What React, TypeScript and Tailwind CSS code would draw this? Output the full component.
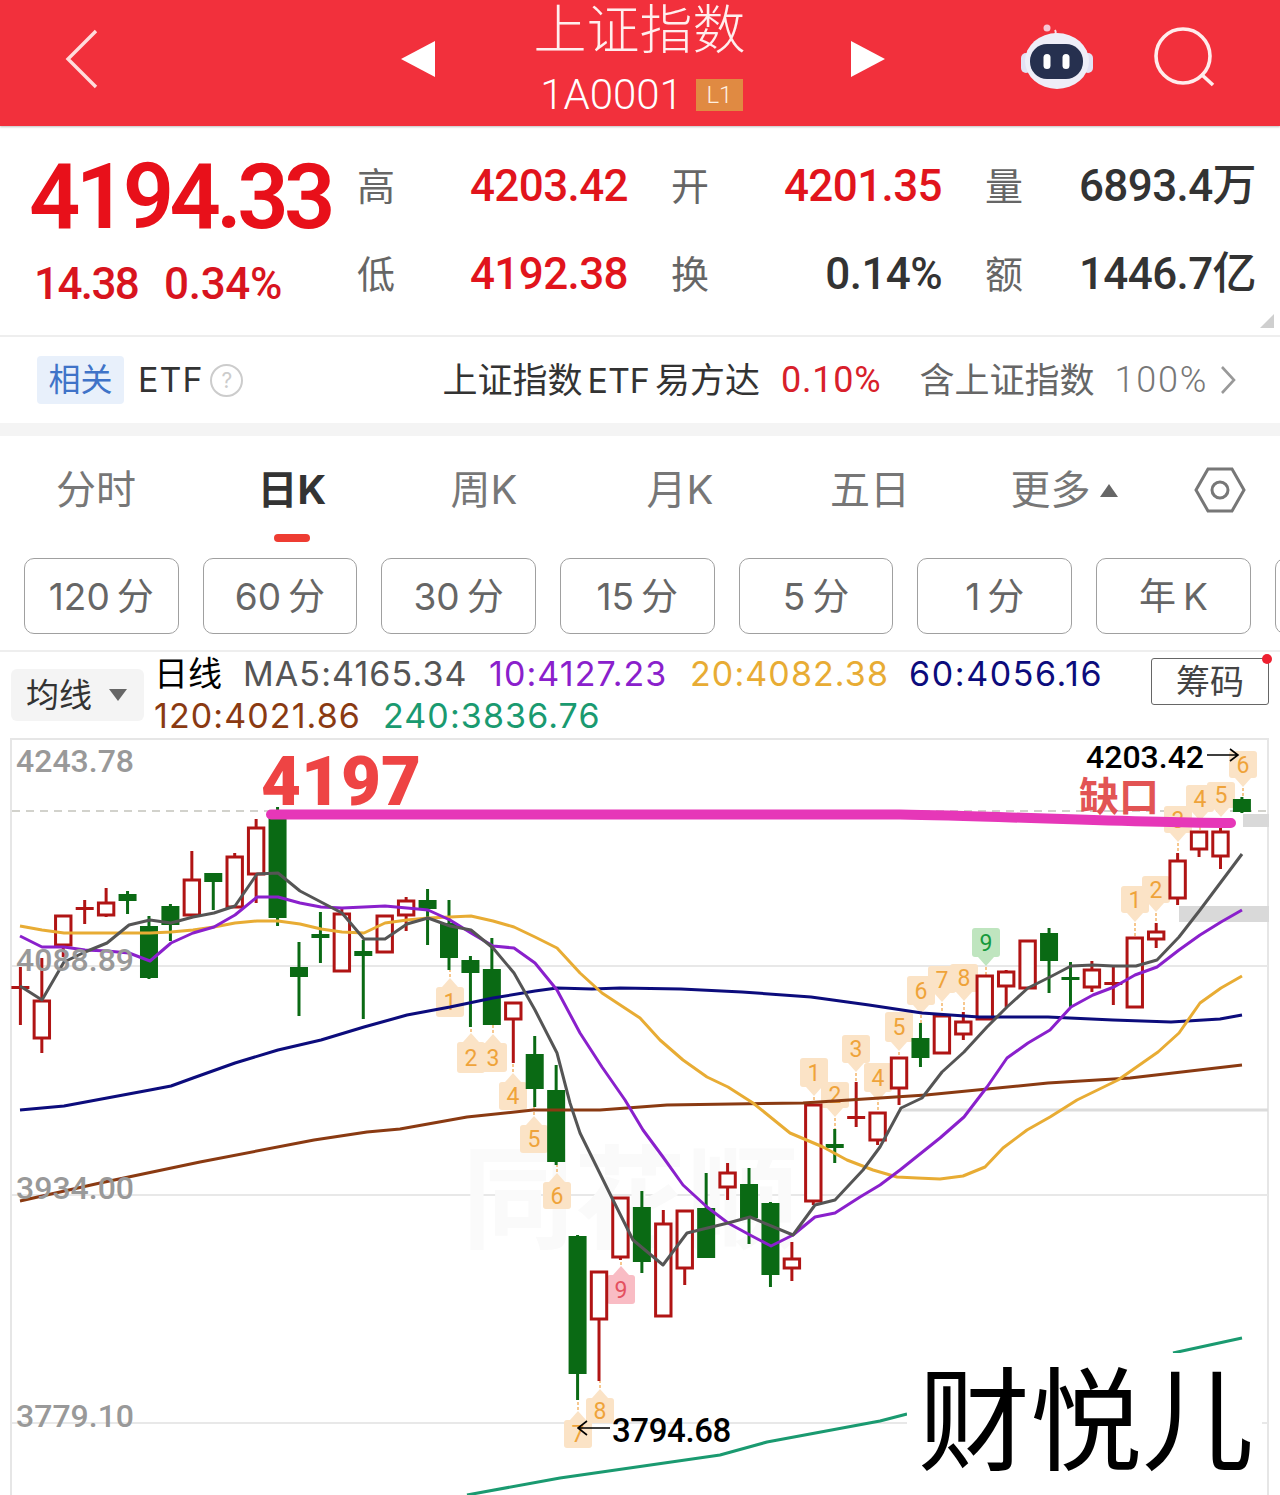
import React from 'react';

type Candle = ['h' | 'g' | 'c', number, number, number, number];
type Tag = [string, number, number, number, number, 'o' | 'p' | 'n'];

// kind, body top, body bottom, wick top, wick bottom
const candles: Candle[] = [
  ['c', 986, 989, 967, 1025], ['h', 1001, 1038, 958, 1053], ['h', 916, 945, 916, 957], ['c', 907, 910, 900, 924],
  ['h', 903, 915, 888, 917], ['g', 894, 901, 891, 914], ['g', 926, 978, 916, 979], ['g', 906, 925, 904, 941],
  ['h', 880, 915, 851, 915], ['g', 873, 882, 873, 910], ['h', 857, 907, 853, 907], ['h', 828, 874, 819, 903],
  ['g', 812, 918, 807, 926], ['g', 967, 977, 942, 1016], ['g', 934, 938, 912, 963], ['h', 914, 971, 908, 971],
  ['g', 951, 956, 940, 1019], ['h', 916, 952, 916, 952], ['h', 901, 915, 897, 931], ['g', 900, 909, 889, 945],
  ['g', 923, 958, 900, 970], ['g', 960, 973, 956, 1027], ['g', 969, 1025, 938, 1025], ['h', 1003, 1019, 1002, 1063],
  ['g', 1054, 1089, 1036, 1107], ['g', 1090, 1162, 1065, 1165], ['g', 1236, 1374, 1235, 1400], ['h', 1272, 1319, 1272, 1381],
  ['h', 1198, 1257, 1198, 1260], ['g', 1207, 1262, 1191, 1273], ['h', 1224, 1316, 1210, 1316], ['h', 1211, 1268, 1211, 1285],
  ['g', 1208, 1258, 1173, 1258], ['h', 1173, 1187, 1163, 1200], ['g', 1184, 1218, 1168, 1244], ['g', 1203, 1275, 1202, 1287],
  ['h', 1259, 1268, 1242, 1281], ['h', 1105, 1201, 1105, 1205], ['g', 1144, 1148, 1129, 1163], ['c', 1116, 1119, 1082, 1127],
  ['h', 1113, 1140, 1113, 1145], ['h', 1058, 1088, 1058, 1105], ['g', 1038, 1058, 1023, 1067], ['h', 1016, 1053, 1016, 1053],
  ['h', 1022, 1034, 1012, 1040], ['h', 976, 1019, 975, 1020], ['h', 972, 986, 970, 1007], ['h', 941, 988, 941, 988],
  ['g', 933, 961, 928, 993], ['g', 977, 980, 962, 1007], ['h', 970, 987, 961, 992], ['c', 982, 985, 965, 1005],
  ['h', 938, 1007, 938, 1007], ['h', 932, 939, 923, 948], ['h', 861, 898, 853, 905], ['h', 832, 849, 832, 857],
  ['h', 832, 856, 828, 869], ['g', 799, 812, 797, 813],
];

// digit, x, box top, box bottom, tip of the pointer, colour
const tags: Tag[] = [
  ['1', 450, 987, 1017, 970, 'o'], ['2', 471, 1042, 1073, 1027, 'o'], ['3', 493, 1043, 1072, 1025, 'o'], ['4', 513, 1082, 1110, 1063, 'o'],
  ['5', 534, 1125, 1153, 1107, 'o'], ['6', 557, 1182, 1209, 1165, 'o'], ['7', 578, 1420, 1448, 1400, 'o'], ['8', 600, 1398, 1423, 1381, 'o'],
  ['9', 621, 1275, 1304, 1260, 'p'], ['1', 814, 1058, 1087, 1103, 'o'], ['2', 835, 1082, 1108, 1129, 'o'], ['3', 856, 1035, 1063, 1082, 'o'],
  ['4', 878, 1063, 1092, 1112, 'o'], ['5', 899, 1012, 1042, 1057, 'o'], ['6', 921, 976, 1005, 1023, 'o'], ['7', 942, 966, 993, 1015, 'o'],
  ['8', 964, 964, 992, 1012, 'o'], ['9', 986, 928, 957, 975, 'n'], ['1', 1135, 886, 913, 937, 'o'], ['2', 1156, 876, 903, 923, 'o'],
  ['3', 1178, 806, 833, 853, 'o'], ['4', 1200, 785, 812, 832, 'o'], ['5', 1221, 782, 808, 828, 'o'], ['6', 1243, 751, 778, 797, 'o'],
];

const ma5 = '20,986 42,1000 64,962 85,952 107,943 129,925 150,920 171,923 193,917 214,913 235,906 257,874 278,873 300,891 321,902 342,913 364,939 385,939 407,924 428,918 450,926 471,930 493,948 514,973 535,1010 557,1053 570,1103 580,1133 613,1200 633,1240 663,1265 687,1233 728,1223 750,1217 793,1235 815,1205 835,1200 863,1170 880,1147 901,1108 922,1098 942,1072 964,1052 987,1027 1007,1007 1028,988 1050,977 1071,966 1093,965 1113,966 1136,966 1157,960 1179,937 1200,910 1221,882 1242,854';
const ma10 = '20,936 42,947 64,947 85,950 107,951 129,953 150,961 171,943 193,933 214,927 235,915 257,897 278,897 300,903 321,907 342,908 364,907 385,906 407,908 428,910 450,920 471,933 493,946 514,948 535,963 557,990 580,1033 602,1067 625,1100 643,1130 663,1157 683,1185 707,1207 728,1223 750,1235 771,1246 793,1235 815,1217 835,1213 860,1197 880,1185 900,1170 940,1138 964,1117 987,1087 1007,1058 1028,1043 1050,1030 1071,1007 1093,995 1114,987 1135,975 1157,967 1179,950 1200,935 1221,922 1242,910';
const ma20 = '20,926 42,930 64,933 85,933 107,933 129,933 150,933 171,932 193,930 214,927 235,923 257,921 278,921 300,924 321,929 342,932 364,933 385,923 407,920 428,918 450,917 471,916 493,921 514,927 535,937 557,948 580,973 602,993 640,1018 660,1040 683,1060 707,1077 728,1087 753,1103 790,1133 823,1147 847,1160 873,1170 897,1177 917,1178 940,1179 963,1176 985,1167 1003,1148 1027,1130 1050,1117 1077,1100 1118,1080 1158,1052 1179,1033 1200,1003 1221,988 1242,976';
const ma60 = '20,1110 42,1108 64,1106 107,1098 150,1090 171,1086 193,1078 235,1063 278,1050 321,1040 364,1027 407,1015 450,1007 493,998 535,991 557,988 592,989 620,988 681,989 742,992 811,997 869,1005 922,1013 979,1017 1048,1017 1113,1020 1171,1022 1220,1019 1242,1015';
const ma120 = '20,1201 100,1183 200,1162 314,1140 367,1132 400,1129 467,1117 533,1110 600,1110 667,1105 803,1103 926,1095 1048,1083 1130,1078 1242,1065';
const ma240a = '467,1495 560,1478 720,1455 767,1442 880,1421 907,1414';
const ma240b = '1173,1353 1242,1338';

const tagFill = { o: '#fbe3c6', p: '#f9bcc4', n: '#bfe5bf' };
const tagText = { o: '#efa33a', p: '#e4505f', n: '#169a3c' };

const AXIS = "Roboto, 'Noto Sans CJK SC', sans-serif";
const CJK = "'Noto Sans CJK SC', sans-serif";

const MaLine = ({ points, color }: { points: string; color: string }) => (
  <polyline points={points} fill="none" stroke={color} strokeWidth={3} strokeLinejoin="round" />
);

const Chart = () => (
  <svg viewBox="0 738 1280 757" width={1280} height={757} className="block">
    {/* grid and frame */}
    <path d="M11 739H1268M11 738V1495M1268 738V1495" stroke="#e6e6e6" strokeWidth={2} fill="none" />
    <path d="M12 966H1268M12 1195H1268M12 1423H1268" stroke="#e8e8e8" strokeWidth={2} fill="none" />
    <path d="M900 1110H1268" stroke="#dcdcdc" strokeWidth={3} fill="none" />
    <path d="M12 811H1268" stroke="#c4c4bc" strokeWidth={1.5} strokeDasharray="8 6" fill="none" />
    <text x={462} y={1240} fontSize={112} fontFamily={CJK} fontWeight={700} fill="#fafafa">同花顺</text>
    <rect x={1243} y={814} width={26} height={13} fill="#d9d9d9" />
    <rect x={1179} y={906} width={90} height={16} fill="#d9d9d9" />

    {/* sequence tags */}
    {tags.map(([digit, x, top, bot, tip, c], i) => {
      const up = tip < top;
      const base = up ? top : bot;
      const point = up ? top - 9 : bot + 9;
      return (
        <g key={i}>
          <path d={`M${x} ${base}V${tip}`} stroke="#f3b56a" strokeWidth={1.5} strokeDasharray="3 2" />
          <polygon points={`${x - 8},${base} ${x + 8},${base} ${x},${point}`} fill={tagFill[c]} />
          <rect x={x - 14} y={top} width={28} height={bot - top} rx={3} fill={tagFill[c]} />
          <text x={x} y={(top + bot) / 2 + 8} textAnchor="middle" fontSize={23} fontFamily={AXIS} fill={tagText[c]}>{digit}</text>
        </g>
      );
    })}

    {/* candles */}
    {candles.map(([kind, top, bot, wt, wb], i) => {
      const x = 20.4 + 21.43 * i;
      const color = kind === 'g' ? '#0a6a14' : '#b01414';
      return (
        <g key={i}>
          <path d={`M${x} ${wt}V${wb}`} stroke={color} strokeWidth={3} />
          {kind === 'h' ? (
            <rect x={x - 7.7} y={top} width={15.4} height={bot - top} fill="#fff" stroke={color} strokeWidth={3} />
          ) : (
            <rect x={x - 9} y={top} width={18} height={bot - top} fill={color} />
          )}
        </g>
      );
    })}

    {/* moving averages */}
    <MaLine points={ma240a} color="#1a9a70" />
    <MaLine points={ma240b} color="#1a9a70" />
    <MaLine points={ma120} color="#8a3a12" />
    <MaLine points={ma60} color="#0c0c7c" />
    <MaLine points={ma20} color="#e8ac34" />
    <MaLine points={ma10} color="#8a20cc" />
    <MaLine points={ma5} color="#555555" />

    {/* hand-drawn notes on top of the chart */}
    <path d="M271 814.5H900C1000 816 1140 823 1231 823" stroke="#e637b8" strokeWidth={10} strokeLinecap="round" fill="none" />
    <text x={261} y={805} fontSize={69} fontWeight={900} fontFamily={AXIS} fill="#ee4444">4197</text>
    <text x={1079} y={811} fontSize={40} fontWeight={700} fontFamily={CJK} fill="#e25454">缺口</text>

    <text x={1086} y={768} fontSize={32} fontWeight={500} fontFamily={AXIS} fill="#000">4203.42</text>
    <path d="M1207 755H1237M1230 749L1238 755L1230 761" stroke="#000" strokeWidth={1.6} fill="none" />
    <text x={612} y={1442} fontSize={33} letterSpacing={-0.4} fontWeight={500} fontFamily={AXIS} fill="#000">3794.68</text>
    <path d="M610 1428H579M587 1421L578 1428L587 1435" stroke="#000" strokeWidth={1.6} fill="none" />

    <g fontSize={32} fontFamily={AXIS} fill="#999999" fontWeight={500}>
      <text x={16} y={772}>4243.78</text>
      <text x={16} y={971}>4088.89</text>
      <text x={16} y={1199}>3934.00</text>
      <text x={16} y={1427}>3779.10</text>
    </g>

    <rect x={907} y={1353} width={355} height={130} fill="#fff" />
    <text x={918} y={1462} fontSize={112} fontFamily={CJK} fill="#000">财悦儿</text>
  </svg>
);

const Robot = () => (
  <svg width={76} height={70} viewBox="1019 24 76 70">
    <path d="M1051 38C1055 37 1057 34 1055 31" stroke="#f6dfe8" strokeWidth={2} fill="none" />
    <circle cx={1047} cy={29} r={3.5} fill="#f6c6d4" />
    <rect x={1021} y={54} width={10} height={20} rx={5} fill="#e2e2f4" />
    <rect x={1083} y={54} width={10} height={20} rx={5} fill="#e2e2f4" />
    <ellipse cx={1057} cy={62} rx={32} ry={28} fill="#eeeef8" />
    <rect x={1030} y={45} width={53} height={35} rx={17} fill="#26304f" />
    <rect x={1043.5} y={55} width={7} height={15} rx={3.5} fill="#fff" />
    <rect x={1062.5} y={55} width={7} height={15} rx={3.5} fill="#fff" />
  </svg>
);

const Stat = ({ label, value, red }: { label: string; value: string; red?: boolean }) => (
  <>
    <div className="text-[38px] leading-none text-[#666666] -ml-[1px]">{label}</div>
    <div className={`text-right text-[44px] leading-none font-medium tracking-[-0.6px] font-['Roboto','Noto_Sans_CJK_SC',sans-serif] whitespace-nowrap ${red ? 'text-[#e1141c]' : 'text-[#333333]'}`}>
      {value}
    </div>
  </>
);

export default function App() {
  const tabs = [
    { name: '分时', w: 'w-[192px]' },
    { name: '日K', w: 'w-[200px]', active: true },
    { name: '周K', w: 'w-[184px]' },
    { name: '月K', w: 'w-[208px]' },
    { name: '五日', w: 'w-[172px]' },
  ];
  const pills = [
    ['120', '分'], ['60', '分'], ['30', '分'], ['15', '分'], ['5', '分'], ['1', '分'], ['年', 'K'],
  ];

  return (
    <div className="w-[1280px] h-[1495px] overflow-hidden bg-white font-['Inter','Noto_Sans_CJK_SC',sans-serif]">
      {/* header */}
      <div className="h-[126px] bg-[#f2303c] flex items-center text-white relative shadow-[0_1px_2px_rgba(0,0,0,0.25)]">
        <svg width={36} height={62} viewBox="0 0 36 62" className="ml-[63px] -mt-[8px]">
          <path d="M33 3L5 31L33 59" stroke="#ffdcdc" strokeWidth={3.4} fill="none" />
        </svg>
        <svg width={36} height={38} viewBox="0 0 36 38" className="ml-[301px] -mt-[8px]">
          <polygon points="1,19 35,1 35,37" fill="#fff" />
        </svg>
        <div className="w-[414px] flex flex-col items-center -mt-[9px]">
          <div className="text-[53px] leading-[56px] font-light text-[#ffeeee] -ml-[7px]">上证指数</div>
          <div className="flex items-center gap-[13px] mt-[17px] -ml-[3px] font-['Roboto','Noto_Sans_CJK_SC',sans-serif]">
            <span className="text-[42px] leading-[40px] font-light">1A0001</span>
            <span className="w-[47px] h-[32px] bg-[#e08a42] flex items-center justify-center text-[24px] font-light text-[#fff0e0]">L1</span>
          </div>
        </div>
        <svg width={36} height={38} viewBox="0 0 36 38" className="-mt-[8px]">
          <polygon points="35,19 1,1 1,37" fill="#fff" />
        </svg>
        <div className="ml-[133px] -mt-[10px]">
          <Robot />
        </div>
        <svg width={66} height={66} viewBox="1152 27 66 66" className="ml-[57px] -mt-[10px]">
          <circle cx={1183} cy={58} r={27} stroke="#ffecec" strokeWidth={3.6} fill="none" />
          <path d="M1201 76L1213 87" stroke="#ffecec" strokeWidth={3.6} />
        </svg>
      </div>

      {/* quote */}
      <div className="h-[209px] flex relative">
        <div className="w-[358px] shrink-0 pl-[29px] pt-[27px] text-[#e8101a] font-['Roboto','Noto_Sans_CJK_SC',sans-serif]">
          <div className="text-[90px] leading-[90px] font-semibold tracking-[-4.6px] whitespace-nowrap">4194.33</div>
          <div className="flex mt-[19px] pl-[5px] text-[44px] leading-[44px] font-medium text-[#d8141e] whitespace-nowrap">
            <span className="w-[130px] tracking-[-1.6px]">14.38</span>
            <span className="tracking-[-0.3px]">0.34%</span>
          </div>
        </div>
        <div className="grid grid-cols-[38px_188px_38px_188px_38px_188px] gap-x-[44px] grid-rows-[88px_88px] items-center content-start pt-[16px]">
          <Stat label="高" value="4203.42" red />
          <Stat label="开" value="4201.35" red />
          <Stat label="量" value="6893.4万" />
          <Stat label="低" value="4192.38" red />
          <Stat label="换" value="0.14%" />
          <Stat label="额" value="1446.7亿" />
        </div>
        <svg width={14} height={14} viewBox="0 0 14 14" className="absolute right-[6px] bottom-[7px]">
          <polygon points="14,0 14,14 0,14" fill="#cfcfcf" />
        </svg>
      </div>
      <div className="h-[2px] bg-[#eeeeee]" />

      {/* related ETF */}
      <div className="h-[86px] flex items-center">
        <div className="ml-[37px] w-[87px] h-[48px] rounded-[4px] bg-[#e8f0fb] flex items-center justify-center text-[32px] text-[#3f73c8] leading-none">相关</div>
        <span className="ml-[14px] text-[34px] leading-none text-[#333333] tracking-[1px]">ETF</span>
        <span className="ml-[7px] w-[33px] h-[33px] rounded-full border-2 border-[#cccccc] flex items-center justify-center text-[21px] leading-none text-[#cccccc]">?</span>
        <span className="ml-[199px] text-[35px] leading-none text-[#333333] whitespace-nowrap">上证指数<span className="mx-[5px] text-[34px]">ETF</span>易方达</span>
        <span className="ml-[21px] text-[36px] leading-none tracking-[0.8px] text-[#d8202a] font-['Roboto','Noto_Sans_CJK_SC',sans-serif]">0.10%</span>
        <span className="ml-[38px] text-[35px] leading-none text-[#666666] whitespace-nowrap">含上证指数</span>
        <span className="ml-[20px] text-[36px] leading-none tracking-[1.8px] text-[#777777] font-['Roboto','Noto_Sans_CJK_SC',sans-serif] font-light">100%</span>
        <svg width={18} height={30} viewBox="0 0 18 30" className="ml-[11px]">
          <path d="M3 2L15 15L3 28" stroke="#999999" strokeWidth={2.6} fill="none" />
        </svg>
      </div>
      <div className="h-[13px] bg-[#f4f4f4]" />

      {/* period tabs */}
      <div className="h-[112px] flex items-start pt-[31px]">
        {tabs.map((t) => (
          <div key={t.name} className={`${t.w} flex flex-col items-center relative`}>
            <span className={`text-[40px] leading-[46px] ${t.active ? 'text-[#333333] font-bold' : 'text-[#777777]'}`}>{t.name}</span>
            {t.active && <span className="absolute top-[67px] w-[36px] h-[8px] rounded-full bg-[#ee3c32]" />}
          </div>
        ))}
        <div className="w-[216px] flex items-center justify-center gap-[9px]">
          <span className="text-[40px] leading-[46px] text-[#777777]">更多</span>
          <svg width={18} height={13} viewBox="0 0 18 13">
            <polygon points="9,0 18,13 0,13" fill="#666666" />
          </svg>
        </div>
        <svg width={52} height={46} viewBox="0 0 52 46" className="ml-[22px]">
          <polygon points="14,2 38,2 50,23 38,44 14,44 2,23" stroke="#777777" strokeWidth={3} fill="none" />
          <circle cx={26} cy={23} r={8} stroke="#777777" strokeWidth={3} fill="none" />
        </svg>
      </div>

      {/* interval pills */}
      <div className="h-[76px] mt-[10px] pl-[24px] flex gap-[24.2px] overflow-hidden">
        {pills.map(([a, b]) => (
          <div key={a} className="w-[154.5px] shrink-0 h-[76px] rounded-[10px] border-[1.5px] border-[#a0a0a0] flex items-center justify-center gap-[7px] text-[37px] leading-none text-[#666666]">
            <span>{a}</span>
            <span>{b}</span>
          </div>
        ))}
        <div className="w-[154.5px] shrink-0 h-[76px] rounded-[10px] border-[1.5px] border-[#a0a0a0]" />
      </div>

      {/* MA legend */}
      <div className="h-[88px] mt-[16px] border-t-2 border-[#eeeeee] flex relative">
        <div className="ml-[11px] mt-[17px] w-[133px] h-[52px] rounded-[6px] bg-[#f4f4f4] flex items-center pl-[15px] gap-[17px] text-[33px] leading-none text-[#333333]">
          <span>均线</span>
          <svg width={18} height={12} viewBox="0 0 18 12">
            <polygon points="0,0 18,0 9,12" fill="#666666" />
          </svg>
        </div>
        <div className="ml-[12px] text-[34px] leading-[42px] whitespace-nowrap">
          <div className="flex mt-[1px]">
            <span className="text-black w-[89px] -ml-[2px]">日线</span>
            <span className="text-[#555555] tracking-[1.1px] w-[246px]">MA5:4165.34</span>
            <span className="text-[#8a20cc] tracking-[1.1px] w-[201px]">10:4127.23</span>
            <span className="text-[#e8ac34] tracking-[1.1px] w-[219px]">20:4082.38</span>
            <span className="text-[#0c0c7c] tracking-[1.6px]">60:4056.16</span>
          </div>
          <div className="flex -ml-[2px]">
            <span className="text-[#8a3a12] tracking-[1.1px] w-[229px]">120:4021.86</span>
            <span className="text-[#1a9a70] tracking-[1.1px]">240:3836.76</span>
          </div>
        </div>
        <div className="absolute left-[1151px] top-[6px] w-[118px] h-[47px] rounded-[3px] border-[1.5px] border-[#666666] flex items-center justify-center text-[34px] leading-none text-[#444444]">
          筹码
          <span className="absolute -right-[4px] -top-[5px] w-[10px] h-[10px] rounded-full bg-[#ee2030]" />
        </div>
      </div>

      <Chart />
    </div>
  );
}
